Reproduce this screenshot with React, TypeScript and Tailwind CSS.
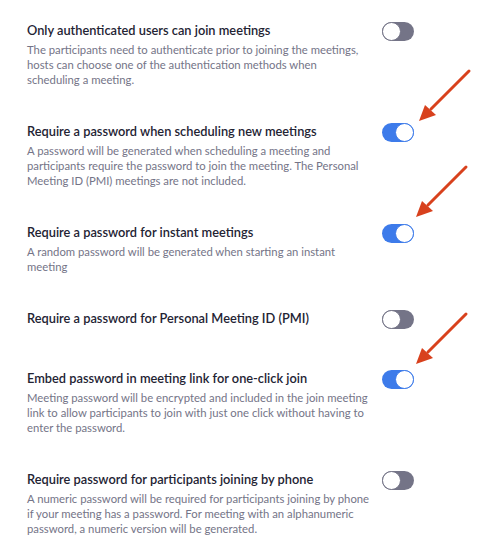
import React from 'react';

type Setting = {
  title: string;
  desc: string[];
  on: boolean;
  pad: string;
};

const settings: Setting[] = [
  {
    title: 'Only authenticated users can join meetings',
    desc: [
      'The participants need to authenticate prior to joining the meetings,',
      'hosts can choose one of the authentication methods when',
      'scheduling a meeting.',
    ],
    on: false,
    pad: 'pb-[34px]',
  },
  {
    title: 'Require a password when scheduling new meetings',
    desc: [
      'A password will be generated when scheduling a meeting and',
      'participants require the password to join the meeting. The Personal',
      'Meeting ID (PMI) meetings are not included.',
    ],
    on: true,
    pad: 'pb-[34px]',
  },
  {
    title: 'Require a password for instant meetings',
    desc: ['A random password will be generated when starting an instant', 'meeting'],
    on: true,
    pad: 'pb-[34px]',
  },
  {
    title: 'Require a password for Personal Meeting ID (PMI)',
    desc: [],
    on: false,
    pad: 'pb-[39px]',
  },
  {
    title: 'Embed password in meeting link for one-click join',
    desc: [
      'Meeting password will be encrypted and included in the join meeting',
      'link to allow participants to join with just one click without having to',
      'enter the password.',
    ],
    on: true,
    pad: 'pb-[34px]',
  },
  {
    title: 'Require password for participants joining by phone',
    desc: [
      'A numeric password will be required for participants joining by phone',
      'if your meeting has a password. For meeting with an alphanumeric',
      'password, a numeric version will be generated.',
    ],
    on: false,
    pad: 'pb-[34px]',
  },
];

const Toggle: React.FC<{ on: boolean }> = ({ on }) => (
  <div
    className={`flex h-[19px] w-[32px] shrink-0 rounded-full ${
      on ? 'justify-end bg-[#3d7bea]' : 'justify-start bg-[#747487]'
    }`}
  >
    <div
      className={`h-[19px] w-[19px] rounded-full bg-white border-[1.5px] ${
        on ? 'border-[#3d7bea]' : 'border-[#747487]'
      }`}
    />
  </div>
);

const Arrow: React.FC<{ className: string }> = ({ className }) => (
  <svg className={`absolute ${className}`} width="56" height="56" viewBox="0 0 56 56">
    <line x1="52" y1="3" x2="14" y2="41" stroke="#d8411d" strokeWidth="3" strokeLinecap="round" />
    <polygon points="2,53 8,37 19,47" fill="#d8411d" />
  </svg>
);

export default function App() {
  return (
    <div className="relative w-[487px] h-[553px] overflow-hidden bg-white font-['Lato','Noto_Sans',sans-serif]">
      <div className="pl-[27px] pt-[20px]">
        {settings.map((s) => (
          <div key={s.title} className={`flex ${s.pad}`}>
            <div className="w-[355px] whitespace-nowrap">
              <div className="text-[12.8px] leading-[20px] font-semibold text-[#232333]">{s.title}</div>
              {s.desc.length > 0 && (
                <div className="mt-[2px] text-[11.3px] leading-[15px] text-[#747487]">
                  {s.desc.map((l) => (
                    <div key={l}>{l}</div>
                  ))}
                </div>
              )}
            </div>
            <div className="mt-[2px]">
              <Toggle on={s.on} />
            </div>
          </div>
        ))}
      </div>
      <Arrow className="left-[417px] top-[68px]" />
      <Arrow className="left-[414px] top-[164px]" />
      <Arrow className="left-[414px] top-[311px]" />
    </div>
  );
}
